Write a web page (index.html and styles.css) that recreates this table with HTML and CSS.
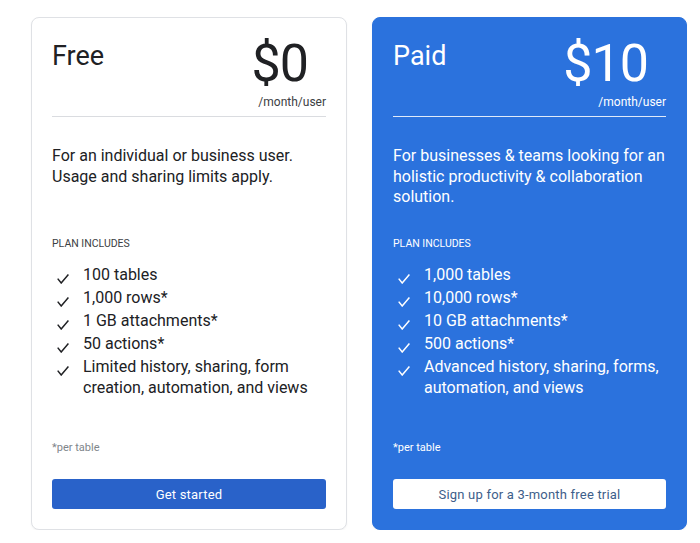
FILE: index.html
```html
<!DOCTYPE html>
<html lang="en">
<head>
<meta charset="utf-8">
<title>Plans</title>
<link rel="stylesheet" href="styles.css">
</head>
<body>
<div class="plans">
  <section class="card">
    <div class="head">
      <h2 class="title">Free</h2>
      <div class="price">
        <div class="amount">$0</div>
        <div class="period">/month/user</div>
      </div>
    </div>
    <div class="divider"></div>
    <p class="desc">For an individual or business user. Usage and sharing limits apply.</p>
    <div class="label">PLAN INCLUDES</div>
    <ul class="features">
      <li><svg class="check" viewBox="0 0 12 10"><path d="M0.7 4.6 L4.2 9 L11.4 0.6"/></svg><span>100 tables</span></li>
      <li><svg class="check" viewBox="0 0 12 10"><path d="M0.7 4.6 L4.2 9 L11.4 0.6"/></svg><span>1,000 rows*</span></li>
      <li><svg class="check" viewBox="0 0 12 10"><path d="M0.7 4.6 L4.2 9 L11.4 0.6"/></svg><span>1 GB attachments*</span></li>
      <li><svg class="check" viewBox="0 0 12 10"><path d="M0.7 4.6 L4.2 9 L11.4 0.6"/></svg><span>50 actions*</span></li>
      <li><svg class="check" viewBox="0 0 12 10"><path d="M0.7 4.6 L4.2 9 L11.4 0.6"/></svg><span>Limited history, sharing, form creation, automation, and views</span></li>
    </ul>
    <div class="note">*per table</div>
    <button class="btn">Get started</button>
  </section>
  <section class="card paid">
    <div class="head">
      <h2 class="title">Paid</h2>
      <div class="price">
        <div class="amount">$10</div>
        <div class="period">/month/user</div>
      </div>
    </div>
    <div class="divider"></div>
    <p class="desc">For businesses &amp; teams looking for an holistic productivity &amp; collaboration solution.</p>
    <div class="label">PLAN INCLUDES</div>
    <ul class="features">
      <li><svg class="check" viewBox="0 0 12 10"><path d="M0.7 4.6 L4.2 9 L11.4 0.6"/></svg><span>1,000 tables</span></li>
      <li><svg class="check" viewBox="0 0 12 10"><path d="M0.7 4.6 L4.2 9 L11.4 0.6"/></svg><span>10,000 rows*</span></li>
      <li><svg class="check" viewBox="0 0 12 10"><path d="M0.7 4.6 L4.2 9 L11.4 0.6"/></svg><span>10 GB attachments*</span></li>
      <li><svg class="check" viewBox="0 0 12 10"><path d="M0.7 4.6 L4.2 9 L11.4 0.6"/></svg><span>500 actions*</span></li>
      <li><svg class="check" viewBox="0 0 12 10"><path d="M0.7 4.6 L4.2 9 L11.4 0.6"/></svg><span>Advanced history, sharing, forms, automation, and views</span></li>
    </ul>
    <div class="note">*per table</div>
    <button class="btn">Sign up for a 3-month free trial</button>
  </section>
</div>
</body>
</html>
```
FILE: styles.css
```css
* { box-sizing: border-box; }
html, body { margin: 0; padding: 0; background: #ffffff; }
body {
  font-family: Roboto, "Noto Sans", "Liberation Sans", sans-serif;
  color: #202124;
}
.plans {
  display: flex;
  gap: 25px;
  padding: 17px 0 0 31px;
}
.card {
  width: 316px;
  height: 513px;
  border: 1px solid #dfe1e5;
  border-radius: 8px;
  padding: 21px 20px 20px 20px;
  display: flex;
  flex-direction: column;
  background: #fff;
  box-shadow: 0 1px 2px rgba(60,64,67,0.06);
}
.card.paid {
  background: #2b72dd;
  border-color: #2b72dd;
  color: #fff;
  width: 315px;
}
.head {
  display: flex;
  justify-content: space-between;
  align-items: flex-start;
}
.title {
  margin: 2px 0 0 0;
  font-size: 27px;
  font-weight: 400;
  line-height: 30px;
}
.price { text-align: right; }
.amount {
  font-size: 52px;
  line-height: 50px;
  font-weight: 400;
  letter-spacing: -1px;
  margin-right: 18px;
}
.period {
  font-size: 12px;
  line-height: 16px;
  margin-top: 5px;
  color: #3c4043;
}
.paid .period { color: #fff; }
.divider {
  height: 1px;
  background: #dadce0;
  margin-top: 6px;
}
.paid .divider { background: rgba(255,255,255,0.85); }
.desc {
  margin: 29px 0 0 0;
  font-size: 16px;
  line-height: 20.5px;
  min-height: 61.5px;
}
.label {
  margin-top: 29px;
  font-size: 10.5px;
  line-height: 14px;
  color: #3c4043;
}
.paid .label { color: #fff; }
.features {
  list-style: none;
  margin: 13px 0 0 0;
  padding: 0;
}
.features li {
  display: flex;
  align-items: flex-start;
  font-size: 16px;
  line-height: 21px;
  margin-bottom: 2px;
}
.check {
  flex: none;
  width: 12px;
  height: 10px;
  margin: 10px 14px 0 5px;
  fill: none;
  stroke: #202124;
  stroke-width: 1.5;
}
.paid .check { stroke: #fff; }
.note {
  margin-top: auto;
  font-size: 11px;
  line-height: 14px;
  color: #80868b;
}
.paid .note { color: #fff; }
.btn {
  margin-top: 24px;
  height: 30px;
  width: 100%;
  border: none;
  border-radius: 3px;
  background: #2962c9;
  color: #fff;
  font-family: inherit;
  font-size: 13px;
  letter-spacing: 0.2px;
  cursor: pointer;
}
.paid .btn {
  background: #fff;
  color: #3d5e8a;
}
```
